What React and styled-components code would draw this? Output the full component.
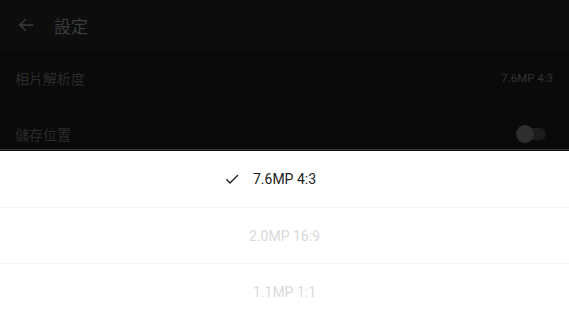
import React, { useState } from "react";
import styled, { createGlobalStyle } from "styled-components";

const GlobalStyle = createGlobalStyle`
  html, body {
    margin: 0;
    padding: 0;
    background: #0a0a0a;
  }
  body {
    font-family: Roboto, "Noto Sans CJK TC", "Noto Sans", sans-serif;
  }
`;

const Screen = styled.div`
  position: relative;
  width: 100vw;
  height: 100vh;
  overflow: hidden;
  background: #0a0a0a;
`;

const Header = styled.header`
  display: flex;
  align-items: center;
  height: 50px;
  padding: 0 16px;
  gap: 18px;
  background: #0d0d0d;
`;

const BackButton = styled.button`
  display: flex;
  align-items: center;
  justify-content: center;
  width: 20px;
  height: 20px;
  padding: 0;
  border: none;
  background: none;
  color: #3a3a3a;
`;

const Title = styled.h1`
  margin: 0;
  font-size: 17px;
  font-weight: 400;
  color: #3c3c3c;
  font-family: Roboto, "Noto Sans CJK TC", sans-serif;
`;

const SettingRow = styled.div`
  display: flex;
  align-items: center;
  justify-content: space-between;
  height: 56px;
  padding: 0 16px 0 15px;
`;

const SettingLabel = styled.span`
  font-size: 14px;
  color: #2b2b2b;
  font-family: Roboto, "Noto Sans CJK TC", sans-serif;
`;

const SettingValue = styled.span`
  font-size: 11.5px;
  color: #333;
`;

const Toggle = styled.div`
  position: relative;
  width: 26px;
  height: 12px;
  margin-right: 7px;
  border-radius: 6px;
  background: #1c1c1c;
`;

const ToggleThumb = styled.span`
  position: absolute;
  left: -4px;
  top: -3px;
  width: 18px;
  height: 18px;
  border-radius: 50%;
  background: #2e2e2e;
`;

const Sheet = styled.div`
  position: absolute;
  left: 0;
  right: 0;
  bottom: 0;
  height: 169px;
  background: #fff;
  box-shadow: 0 -1px 0 #0c0c0c, 0 -2px 0 #3a3a3a;
`;

const Option = styled.button`
  display: grid;
  grid-template-columns: 1fr auto 1fr;
  align-items: center;
  column-gap: 13px;
  width: 100%;
  height: 56px;
  padding: 0;
  border: none;
  border-top: ${(p) => (p.$first ? "none" : "1px solid #f4f4f4")};
  background: #fff;
  font-family: Roboto, sans-serif;
  font-size: 14px;
  color: ${(p) => (p.$selected ? "#212121" : "#d9d9d9")};
  cursor: pointer;
`;

const CheckSlot = styled.span`
  justify-self: end;
  display: flex;
  align-items: center;
  color: #212121;
`;

const options = ["7.6MP 4:3", "2.0MP 16:9", "1.1MP 1:1"];

const BackArrow = () => (
  <svg width="18" height="18" viewBox="0 0 24 24" fill="none" stroke="currentColor" strokeWidth="2" strokeLinecap="square">
    <path d="M21 12H4M11 5l-7 7 7 7" />
  </svg>
);

const Check = () => (
  <svg width="16" height="16" viewBox="0 0 24 24" fill="none" stroke="currentColor" strokeWidth="2">
    <path d="M3.5 12.5l5.5 5.5L21 6" />
  </svg>
);

const App = () => {
  const [selected, setSelected] = useState(0);

  return (
    <Screen>
      <GlobalStyle />
      <Header>
        <BackButton>
          <BackArrow />
        </BackButton>
        <Title>設定</Title>
      </Header>
      <SettingRow>
        <SettingLabel>相片解析度</SettingLabel>
        <SettingValue>{options[selected]}</SettingValue>
      </SettingRow>
      <SettingRow>
        <SettingLabel>儲存位置</SettingLabel>
        <Toggle>
          <ToggleThumb />
        </Toggle>
      </SettingRow>

      <Sheet>
        {options.map((opt, i) => (
          <Option key={opt} $first={i === 0} $selected={i === selected} onClick={() => setSelected(i)}>
            <CheckSlot>{i === selected && <Check />}</CheckSlot>
            <span>{opt}</span>
            <span />
          </Option>
        ))}
      </Sheet>
    </Screen>
  );
};

export default App;
